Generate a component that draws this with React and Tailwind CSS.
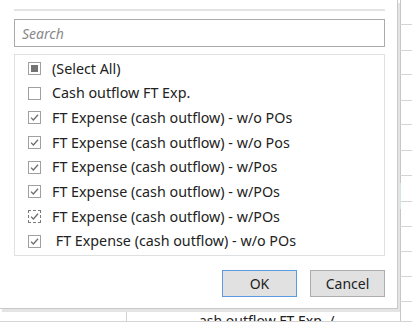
import React from 'react';

const rowHeights = [26, 27, 25, 27, 25, 27, 26, 27, 26, 26, 26, 26, 20];

const items = [
  { label: '(Select All)', state: 'partial' },
  { label: 'Cash outflow FT Exp.', state: 'off' },
  { label: 'FT Expense (cash outflow) - w/o POs', state: 'on' },
  { label: 'FT Expense (cash outflow) - w/o Pos', state: 'on' },
  { label: 'FT Expense (cash outflow) - w/Pos', state: 'on' },
  { label: 'FT Expense (cash outflow) - w/POs', state: 'on' },
  { label: 'FT Expense (cash outflow) - w/POs', state: 'focus' },
  { label: '\u00a0FT Expense (cash outflow) - w/o POs', state: 'on' },
];

const Box = ({ state }) => {
  const border = state === 'focus' ? 'border border-dashed border-[#7a7a7a]' : 'border border-[#a0a0a0]';
  return (
    <span className={`w-[13px] h-[13px] shrink-0 bg-white flex items-center justify-center ${border}`}>
      {state === 'partial' && <span className="w-[7px] h-[7px] bg-[#737373]" />}
      {(state === 'on' || state === 'focus') && (
        <svg width="11" height="11" viewBox="0 0 11 11">
          <path d="M2 5.6 L4.4 8 L9 2.8" fill="none" stroke="#6e6e6e" strokeWidth="1.3" />
        </svg>
      )}
    </span>
  );
};

const Sheet = () => (
  <div className="absolute inset-0 flex flex-col">
    {rowHeights.map((h, i) => (
      <div key={i} className="flex border-b border-[#d4d4d4]" style={{ height: h }}>
        <div className="w-[127px] border-r border-[#d4d4d4]" />
        <div className="w-[274px] border-r border-[#c6c6c6] pt-[9px] pl-[72px] text-[14px] leading-[19px] text-[#222] overflow-hidden whitespace-nowrap">
          {i === 12 ? 'ash outflow FT Exp. /' : ''}
        </div>
        <div className="flex-1" />
      </div>
    ))}
    <div className="absolute left-[399px] top-[183px] w-[2px] h-[26px] bg-[#cfe9dc]" />
  </div>
);

export default function App() {
  return (
    <div className="relative w-[412px] h-[322px] bg-white overflow-hidden font-['Noto_Sans',sans-serif]">
      <Sheet />
      {/* filter dropdown */}
      <div className="absolute left-0 top-0 w-[398px] h-[309px] bg-white border-r border-b border-[#c9c9c9] shadow-[2px_3px_0_#e4e4e4] flex flex-col pl-[14px] pr-[12px] pt-[9px]">
        <div className="h-[2px] bg-[#e3e3e3]" />
        <div className="mt-[8px] h-[28px] border border-[#ababab] flex items-center pl-[7px] text-[14px] italic text-[#8a8a8a]">
          Search
        </div>
        <div className="mt-[7px] h-[202px] border border-[#dde1e4] pt-[1px] pl-[13px] flex flex-col">
          {items.map((it, i) => (
            <div key={i} className="h-[24.7px] flex items-center gap-[11px] text-[14.3px] text-[#222] whitespace-nowrap">
              <Box state={it.state} />
              <span>{it.label}</span>
            </div>
          ))}
        </div>
        <div className="mt-[14px] flex justify-end gap-[13px]">
          <button className="w-[75px] h-[27px] bg-[#e1e1e1] border border-[#5c9ae2] text-[14px] text-[#222]">OK</button>
          <button className="w-[75px] h-[27px] bg-[#e1e1e1] border border-[#adadad] text-[14px] text-[#222]">Cancel</button>
        </div>
      </div>
    </div>
  );
}
